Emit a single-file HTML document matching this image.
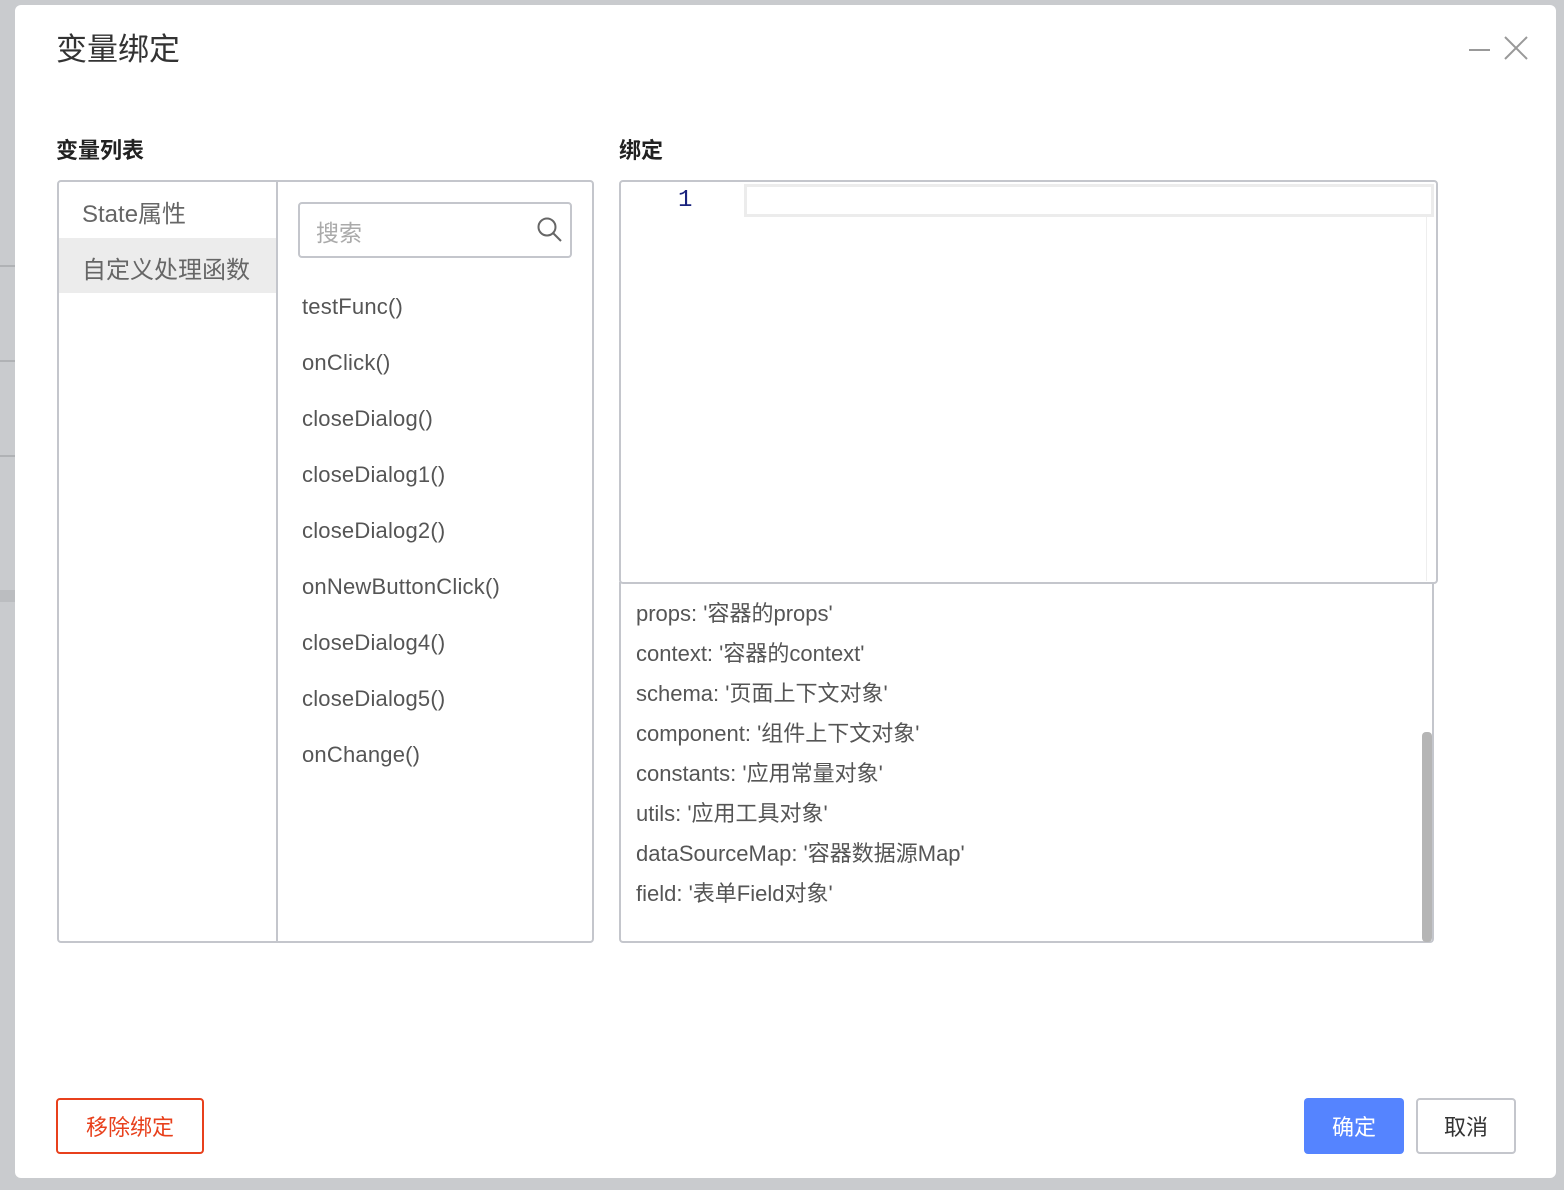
<!DOCTYPE html>
<html><head><meta charset="utf-8"><style>
*{margin:0;padding:0;box-sizing:border-box}
body{width:1564px;height:1190px;background:#c9cbce;position:relative;overflow:hidden;font-family:"Liberation Sans","Noto Sans CJK SC",sans-serif}
.a{position:absolute}
.dlg{left:15px;top:5px;width:1541px;height:1173px;background:#fff;border-radius:6px}
.t{font-size:31px;color:#333;left:56px;top:24px}
.h{font-size:22px;font-weight:bold;color:#222}
.box{border:2px solid #c4c6cc;border-radius:4px}
.item{font-size:22px;color:#555;left:302px;letter-spacing:0.2px}
.hint{font-size:22px;color:#555;left:636px}
.btn{font-size:22px;border-radius:4px;display:flex;align-items:center;justify-content:center}
</style></head><body>
<div class="a" style="left:0;top:265px;width:15px;height:2px;background:#b0b2b5"></div>
<div class="a" style="left:0;top:360px;width:15px;height:2px;background:#b0b2b5"></div>
<div class="a" style="left:0;top:455px;width:15px;height:2px;background:#b0b2b5"></div>
<div class="a" style="left:0;top:590px;width:15px;height:12px;background:#bbbdc0"></div>
<div class="a dlg"></div>
<div class="a t">变量绑定</div>
<svg class="a" style="left:1466px;top:33px" width="66" height="30"><line x1="3" y1="17" x2="24" y2="17" stroke="#999" stroke-width="2"/><line x1="39" y1="4" x2="61" y2="26" stroke="#999" stroke-width="2"/><line x1="61" y1="4" x2="39" y2="26" stroke="#999" stroke-width="2"/></svg>
<div class="a h" style="left:56px;top:133px">变量列表</div>
<div class="a h" style="left:619px;top:133px">绑定</div>
<div class="a box" style="left:57px;top:180px;width:537px;height:763px"></div>
<div class="a" style="left:276px;top:182px;width:2px;height:759px;background:#c4c6cc"></div>
<div class="a" style="left:59px;top:238px;width:217px;height:55px;background:#ececec"></div>
<div class="a" style="left:82px;top:194px;font-size:24px;color:#666">State属性</div>
<div class="a" style="left:82px;top:250px;font-size:24px;color:#666">自定义处理函数</div>
<div class="a box" style="left:298px;top:202px;width:274px;height:56px"></div>
<div class="a" style="left:316px;top:214px;font-size:23px;color:#aaa">搜索</div>
<svg class="a" style="left:536px;top:216px" width="28" height="28"><circle cx="11" cy="11" r="8.5" stroke="#666" stroke-width="2" fill="none"/><line x1="17" y1="17" x2="25" y2="25" stroke="#666" stroke-width="2"/></svg>
<div class="a item" style="top:294px">testFunc()</div>
<div class="a item" style="top:350px">onClick()</div>
<div class="a item" style="top:406px">closeDialog()</div>
<div class="a item" style="top:462px">closeDialog1()</div>
<div class="a item" style="top:518px">closeDialog2()</div>
<div class="a item" style="top:574px">onNewButtonClick()</div>
<div class="a item" style="top:630px">closeDialog4()</div>
<div class="a item" style="top:686px">closeDialog5()</div>
<div class="a item" style="top:742px">onChange()</div>
<div class="a" style="left:619px;top:582px;width:815px;height:361px;border:2px solid #c4c6cc;border-top:none;border-radius:0 0 4px 4px"></div>
<div class="a hint" style="top:596px">props: '容器的props'</div>
<div class="a hint" style="top:636px">context: '容器的context'</div>
<div class="a hint" style="top:676px">schema: '页面上下文对象'</div>
<div class="a hint" style="top:716px">component: '组件上下文对象'</div>
<div class="a hint" style="top:756px">constants: '应用常量对象'</div>
<div class="a hint" style="top:796px">utils: '应用工具对象'</div>
<div class="a hint" style="top:836px">dataSourceMap: '容器数据源Map'</div>
<div class="a hint" style="top:876px">field: '表单Field对象'</div>
<div class="a" style="left:1422px;top:732px;width:10px;height:210px;background:#b5b5b5;border-radius:4px"></div>
<div class="a box" style="left:619px;top:180px;width:819px;height:404px;background:#fff"></div>
<div class="a" style="left:744px;top:184px;width:690px;height:33px;border:3px solid #ececec"></div>
<div class="a" style="left:1426px;top:217px;width:1px;height:364px;background:#eee"></div>
<div class="a" style="left:678px;top:187px;font-size:24px;color:#1a237e;font-family:'Liberation Mono',monospace">1</div>
<div class="a btn" style="left:56px;top:1098px;width:148px;height:56px;border:2px solid #e8401c;color:#e8401c">移除绑定</div>
<div class="a btn" style="left:1304px;top:1098px;width:100px;height:56px;background:#5584ff;color:#fff">确定</div>
<div class="a btn" style="left:1416px;top:1098px;width:100px;height:56px;border:2px solid #c4c6cc;color:#333">取消</div>
</body></html>
